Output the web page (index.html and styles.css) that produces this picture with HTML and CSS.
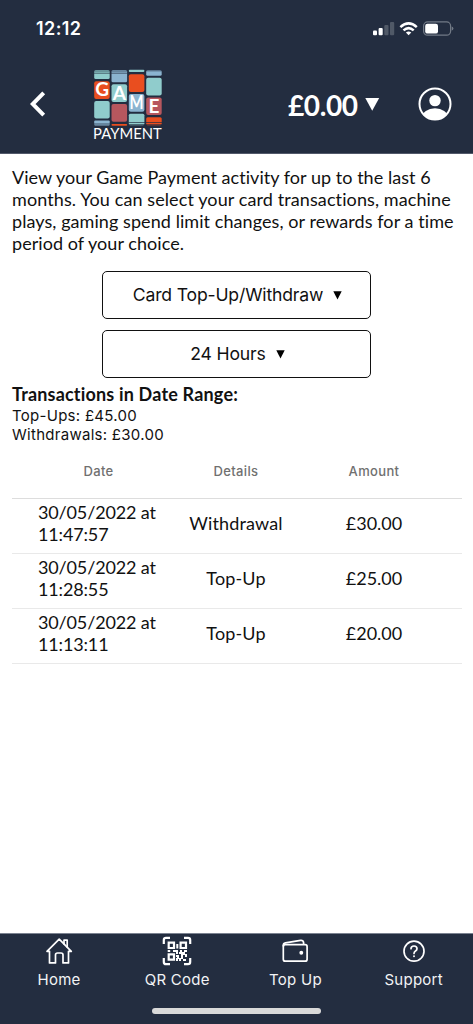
FILE: index.html
```html
<!DOCTYPE html>
<html lang="en">
<head>
<meta charset="utf-8">
<title>Game Payment</title>
<link rel="stylesheet" href="styles.css">
</head>
<body>
<div class="app">
  <header class="top">
    <div class="status">
      <span class="clock">12:12</span>
      <svg class="status-icons" width="82" height="16" viewBox="372 21 82 16">
        <g fill="#fff"><rect x="373" y="30.5" width="4" height="4.7" rx="1"/><rect x="378.6" y="28" width="4.1" height="7.2" rx="1"/></g>
        <g fill="#505967"><rect x="384.3" y="25" width="4.2" height="10.2" rx="1"/><rect x="390" y="22" width="4.2" height="13.2" rx="1"/></g>
        <g fill="none" stroke="#fff" stroke-width="2.5"><path d="M400.4 27.2Q408.6 19.6 416.8 27.2"/><path d="M403.5 30.4Q408.6 25.8 413.7 30.4"/></g>
        <path d="M405.9 32.6Q408.6 30.4 411.3 32.6L408.6 35.3Z" fill="#fff"/>
        <rect x="423.6" y="21.9" width="27" height="13.3" rx="4" fill="none" stroke="#727a86" stroke-width="1.2"/>
        <rect x="425.2" y="23.7" width="12.8" height="9.9" rx="2.2" fill="#fff"/>
        <path d="M451.7 26.4Q453.4 27 453.4 28.5T451.7 30.8Z" fill="#727a86"/>
      </svg>
    </div>
    <div class="bar">
      <svg class="back" width="16" height="26" viewBox="0 0 16 26"><path d="M13.7 1.8L2.7 13L13.7 24.2" fill="none" stroke="#fff" stroke-width="4"/></svg>
      <svg class="logo" width="72" height="73" viewBox="91.5 69 72 73">
        <g fill="#90cccc">
          <rect x="93.7" y="70" width="15.5" height="9" rx="1.5"/><rect x="93.7" y="101" width="15.5" height="17.5" rx="2"/>
          <rect x="111" y="84.3" width="15.6" height="17.7" rx="2"/>
          <rect x="128.3" y="69.7" width="15.6" height="2.4" rx="1"/><rect x="128.3" y="113.8" width="15.6" height="11.5" rx="1.5"/>
          <rect x="145.7" y="77.7" width="15.5" height="17.7" rx="2"/>
        </g>
        <g fill="#8bb4d0">
          <rect x="93.7" y="120.4" width="15.5" height="5" rx="1"/><rect x="111" y="70" width="15.6" height="12.3" rx="1.5"/>
          <rect x="128.3" y="94" width="15.6" height="17.8" rx="2"/><rect x="145.7" y="70" width="15.5" height="5.8" rx="1.5"/>
        </g>
        <g fill="#e94e1f">
          <rect x="93.7" y="81.2" width="15.5" height="17.8" rx="2"/><rect x="128.3" y="74.2" width="15.6" height="17.8" rx="2"/>
          <rect x="145.7" y="117.2" width="15.5" height="8.1" rx="1.5"/><rect x="111" y="123.9" width="15.6" height="1.8" rx=".8"/>
        </g>
        <g fill="#b7575e"><rect x="111" y="104" width="15.6" height="17.8" rx="2"/><rect x="145.7" y="97.4" width="15.5" height="17.7" rx="2"/></g>
        <path d="M93 73.2H127M145 70.8H162M93 71H127M93 124H110M128 122.5H162M128 124.6H162" stroke="#242e42" stroke-width=".7"/>
        <g class="logo-letters">
          <text x="101.7" y="96">G</text><text x="118.8" y="99.8">A</text><text x="136.1" y="109" textLength="14" lengthAdjust="spacingAndGlyphs">M</text><text x="153.4" y="112.6">E</text>
        </g>
        <text class="logo-name" x="92.6" y="139" textLength="68.6" lengthAdjust="spacingAndGlyphs">PAYMENT</text>
      </svg>
      <div class="balance"><span>£0.00</span><svg width="15" height="13" viewBox="0 0 15 13"><path d="M.3 0H14.2L7.2 12.8Z" fill="#fff"/></svg></div>
      <svg class="user" width="34" height="34" viewBox="0 0 34 34">
        <defs><clipPath id="disc"><circle cx="17" cy="17" r="15.5"/></clipPath></defs>
        <circle cx="17" cy="17" r="15.5" fill="none" stroke="#fff" stroke-width="2"/>
        <circle cx="17" cy="13.6" r="5.7" fill="#fff"/>
        <ellipse cx="17" cy="31" rx="13" ry="9.8" fill="#fff" clip-path="url(#disc)"/>
      </svg>
    </div>
  </header>
  <main class="content">
    <p class="intro"><span class="l1">View your Game Payment activity for up to the last 6</span><br><span class="l2">months. You can select your card transactions, machine</span><br><span class="l3">plays, gaming spend limit changes, or rewards for a time</span><br><span class="l4">period of your choice.</span></p>
    <div class="filters">
      <button class="select"><span>Card Top-Up/Withdraw</span><svg width="9" height="9" viewBox="0 0 9 9"><path d="M.3.3H8.7L4.5 8.5Z"/></svg></button>
      <button class="select"><span>24 Hours</span><svg width="9" height="9" viewBox="0 0 9 9"><path d="M.3.3H8.7L4.5 8.5Z"/></svg></button>
    </div>
    <section class="summary">
      <h2>Transactions in Date Range:</h2>
      <p>Top-Ups: £45.00</p>
      <p>Withdrawals: £30.00</p>
    </section>
    <div class="table">
      <div class="row head"><span>Date</span><span>Details</span><span>Amount</span></div>
      <div class="row"><span class="date">30/05/2022 at<br>11:47:57</span><span class="kind">Withdrawal</span><span>£30.00</span></div>
      <div class="row"><span class="date">30/05/2022 at<br>11:28:55</span><span class="kind">Top-Up</span><span>£25.00</span></div>
      <div class="row"><span class="date">30/05/2022 at<br>11:13:11</span><span class="kind">Top-Up</span><span>£20.00</span></div>
    </div>
  </main>
  <footer class="bottom">
    <nav class="tabs">
      <a class="tab"><svg width="30" height="30" viewBox="0 0 30 30" fill="none" stroke="#fff" stroke-width="1.7" stroke-linejoin="round" stroke-linecap="round"><path d="M3 15.3L15.2 3.2L27.3 15.3H24.5V26.9H19V19Q19 17 17 17H13.5Q11.5 17 11.5 19V26.9H5.5V15.3Z"/><path d="M20 7.8V4.2H23.2V11"/></svg><span>Home</span></a>
      <a class="tab"><svg width="30" height="30" viewBox="0 0 30 30" fill="none" stroke="#fff" stroke-width="2.2"><path d="M1.8 8V4Q1.8 1.8 4 1.8H8M22 1.8H26Q28.2 1.8 28.2 4V8M28.2 22V26Q28.2 28.2 26 28.2H22M8 28.2H4Q1.8 28.2 1.8 26V22"/><path stroke-width="2.2" d="M6.7 6.7H12V12H6.7ZM18.6 6.7H24V12H18.6ZM6.7 18.4H12V23.6H6.7Z"/><path fill="#fff" stroke="none" d="M14.3 8h2v4.5h-2ZM5.7 14h2.5v2H5.7ZM11 14h5v4h-2v-2h-3ZM18 14h2v2h2v-2h3v2h-2v2h2v3h-2v-2h-2v2h-2v-3h-2v-2h1ZM14 19h3v3h2v-2h2v3h3v2h-3v-2h-2v2h-2v-2h-1v2h-2v-3h1v-1h-1Z"/></svg><span>QR Code</span></a>
      <a class="tab"><svg width="30" height="30" viewBox="0 0 30 30" fill="none" stroke="#fff" stroke-width="1.7" stroke-linejoin="round"><rect x="3.3" y="8.7" width="23.8" height="16.5" rx="2"/><path d="M3.3 10.5V9.3Q3.3 7.2 5.4 6.8L20.5 4.4Q23.1 4 23.6 6.5V8.7"/><circle cx="21.3" cy="16.8" r="1.1" fill="#fff"/></svg><span>Top Up</span></a>
      <a class="tab"><svg width="30" height="30" viewBox="0 0 30 30" fill="none" stroke="#fff" stroke-width="1.7" stroke-linecap="round"><circle cx="15" cy="15.2" r="10"/><path d="M12 12.7Q12 10 15 10T18 12.7Q18 14 16.5 15T15 17.5"/><circle cx="15" cy="20.3" r=".4" fill="#fff" stroke-width="1.2"/></svg><span>Support</span></a>
    </nav>
    <div class="home-line"></div>
  </footer>
</div>
</body>
</html>
```

FILE: styles.css
```css
* { box-sizing: border-box; }
body { margin: 0; background: #fff; color: #111; font-family: Inter, sans-serif; font-variant-ligatures: none; }
p, h2 { margin: 0; }
.app { width: 473px; height: 1024px; display: flex; flex-direction: column; overflow: hidden; }
.top { height: 154px; background: #232d40; color: #fff; flex: none; border-bottom: 1px solid #52596a; }
.status { height: 56px; display: flex; justify-content: space-between; padding: 17px 19px 0 36px; }
.clock { font-size: 18px; line-height: 24px; font-weight: 600; letter-spacing: .4px; }
.status-icons { margin-top: 4px; }
.bar { height: 97px; display: flex; align-items: flex-start; padding-left: 30px; }
.back { margin-top: 35px; }
.logo { margin: 13px 0 0 45.5px; }
.logo-letters { font-family: Lato, sans-serif; font-weight: 700; font-size: 19px; fill: #fff; text-anchor: middle; }
.logo-name { font-family: Lato, sans-serif; font-size: 15.5px; fill: #fff; }
.balance { width: 92px; margin: 31px 0 0 124.5px; display: flex; align-items: center; justify-content: space-between; font: 700 28px/36px Lato, sans-serif; letter-spacing: -.4px; }
.balance svg { margin-bottom: 2px; }
.user { margin: 31px 0 0 38px; }
.content { flex: 1; padding: 12px 11px 0 12px; }
.intro { font: 18px/22px Lato, sans-serif; font-variant-ligatures: none; white-space: nowrap; }
.l1 { letter-spacing: .04px; }
.l2 { letter-spacing: .1px; }
.l3 { letter-spacing: .07px; }
.l4 { letter-spacing: .05px; }
.filters { margin-top: 17px; display: flex; flex-direction: column; gap: 11px; padding-left: 90px; }
.select { width: 269px; height: 48px; background: #fff; border: 1px solid #111; border-radius: 5px; padding: 0 0 0 2px; display: flex; align-items: center; justify-content: center; gap: 10px; font: 17.6px/24px Inter, sans-serif; letter-spacing: -.17px; color: #111; white-space: nowrap; }
.summary { margin-top: 6px; font-size: 15px; line-height: 19.5px; letter-spacing: .28px; }
.summary h2 { font: 700 18px/21.5px Lato, sans-serif; font-variant-ligatures: none; letter-spacing: .18px; }
.row { height: 55px; display: grid; grid-template-columns: 173px 102px 174px; align-items: center; text-align: center; border-bottom: 1px solid #e9e9e9; font: 18px/22px Lato, sans-serif; padding-bottom: 7px; }
.row.head { height: 54.5px; padding-bottom: 1px; border-color: #ddd; color: #707070; font: 500 13px/18px Inter, sans-serif; letter-spacing: .35px; }
.date { justify-self: start; margin-left: 26px; text-align: left; letter-spacing: -.15px; }
.kind { letter-spacing: .15px; }
.bottom { height: 91px; flex: none; background: #232d40; color: #f2f3f5; border-top: 1px solid #7b8290; }
.tabs { display: grid; grid-template-columns: repeat(4, 118.2px); }
.tab { display: flex; flex-direction: column; align-items: center; padding-top: 2px; font-size: 15px; line-height: 22px; letter-spacing: .25px; }
.tab span { margin-top: 3px; }
.home-line { width: 169px; height: 6px; margin: 17px auto 0; border-radius: 3px; background: #d9d9d9; }
```
